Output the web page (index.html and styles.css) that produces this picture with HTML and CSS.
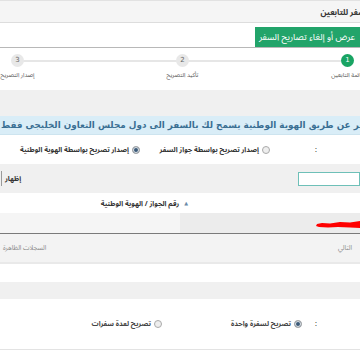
FILE: index.html
```html
<!DOCTYPE html>
<html lang="ar">
<head>
    <meta charset="UTF-8">
    <meta name="viewport" content="width=device-width, initial-scale=1.0">
    <title>تصاريح السفر للتابعين</title>
    <link rel="stylesheet" href="styles.css">
</head>
<body>
    <div class="page">
        <div class="panel-head">
            <h2 class="panel-title">تصاريح السفر للتابعين</h2>
        </div>
        <div class="tabs">
            <a class="tab active">عرض أو إلغاء تصاريح السفر</a>
        </div>
        <div class="steps">
            <div class="step done"><span class="dot">1</span><span class="step-label">قائمة التابعين</span></div>
            <div class="step"><span class="dot">2</span><span class="step-label">تأكيد التصريح</span></div>
            <div class="step last"><span class="dot">3</span><span class="step-label">إصدار التصريح</span></div>
        </div>
        <div class="spacer"></div>
        <div class="alert"><span class="alert-text">إصدار تصريح السفر عن طريق الهوية الوطنية يسمح لك بالسفر الى دول مجلس التعاون الخليجي فقط</span></div>
        <div class="option-row">
            <span class="colon">:</span>
            <label class="radio"><span class="radio-mark"></span>إصدار تصريح بواسطة جواز السفر</label>
            <label class="radio"><span class="radio-mark checked"></span>إصدار تصريح بواسطة الهوية الوطنية</label>
        </div>
        <div class="search-bar">
            <input type="text" class="search-input">
            <span class="show-btn">إظهار</span>
        </div>
        <div class="grid">
            <div class="grid-head">
                <div class="cell cell-main"></div>
                <div class="cell cell-id"><span class="sort">▲</span>رقم الجواز / الهوية الوطنية</div>
            </div>
            <div class="grid-row">
                <div class="cell cell-main">
                    <svg class="redact" width="44" height="9" viewBox="0 0 44 9"><path d="M1 4 L6 3 L14 3.5 L24 2 L34 2.5 L44 1 L44 8 L34 7.5 L22 7 L12 7.5 L3 7 L0 6 Z" fill="#f00"/></svg>
                </div>
                <div class="cell cell-id"></div>
            </div>
            <div class="grid-foot">
                <span class="next">التالي</span>
                <span class="info">السجلات الظاهرة</span>
            </div>
        </div>
        <div class="blank"></div>
        <div class="spacer small"></div>
        <div class="option-row trip">
            <span class="colon">:</span>
            <label class="radio"><span class="radio-mark checked"></span>تصريح لسفرة واحدة</label>
            <label class="radio"><span class="radio-mark"></span>تصريح لعدة سفرات</label>
        </div>
    </div>
</body>
</html>
```

FILE: styles.css
```css
html, body {
    margin: 0;
    padding: 0;
    overflow: hidden;
}
body {
    width: 360px;
    height: 360px;
    background-color: #fff;
    font-family: "Noto Sans Arabic", "DejaVu Sans", sans-serif;
    font-size: 7px;
    color: #333;
}
.page {
    direction: rtl;
}
.panel-head {
    height: 21px;
    background-color: #f5f5f5;
    border-top: 1px solid #e2e2e2;
    border-bottom: 1px solid #ddd;
    overflow: hidden;
}
.panel-title {
    margin: 0 -38px 0 0;
    font-size: 8px;
    font-weight: bold;
    line-height: 23px;
    white-space: nowrap;
    color: #333;
}
.tabs {
    display: flex;
    padding-top: 4px;
    border-bottom: 1px solid #b8b8b8;
    box-shadow: 0 1px 0 #e4e4e4;
}
.tab {
    display: block;
    height: 20px;
    line-height: 21px;
    padding: 0 5px 0 4px;
    font-size: 9px;
    color: #fff;
    white-space: nowrap;
}
.tab.active {
    background-color: #22a46a;
}
.steps {
    display: flex;
    margin: 0 -70px 0 -65px;
    height: 42px;
    background-color: #fff;
}
.step {
    position: relative;
    width: 165px;
    display: flex;
    flex-direction: column;
    align-items: center;
}
.step::after {
    content: "";
    position: absolute;
    top: 12px;
    right: 50%;
    width: 100%;
    height: 2px;
    background-color: #e6e6e6;
    z-index: 0;
}
.step.last::after {
    display: none;
}
.dot {
    position: relative;
    z-index: 1;
    width: 13px;
    height: 13px;
    margin-top: 6px;
    border-radius: 50%;
    background-color: #e8e8e8;
    color: #666;
    font-family: "DejaVu Sans", sans-serif;
    font-size: 7px;
    line-height: 13px;
    text-align: center;
}
.step.done .dot {
    background-color: #19a463;
    color: #fff;
}
.step-label {
    margin-top: 3px;
    font-size: 6px;
    line-height: 10px;
    color: #555;
    white-space: nowrap;
}
.spacer {
    height: 26px;
    background-color: #f0f0f0;
}
.spacer.small {
    height: 17px;
}
.alert {
    display: flex;
    direction: ltr;
    height: 18px;
    background-color: #d9edf7;
    border-bottom: 1px solid #cde4ef;
    overflow: hidden;
}
.alert-text {
    flex: none;
    direction: rtl;
    padding-left: 1px;
    white-space: nowrap;
    font-family: "DejaVu Sans", sans-serif;
    font-size: 8.8px;
    font-weight: bold;
    line-height: 18px;
    color: #3a6f93;
}
.option-row {
    display: flex;
    align-items: center;
    height: 29px;
    background-color: #fff;
    font-weight: bold;
    line-height: 12px;
    color: #333;
}
.colon {
    width: 90px;
    padding-right: 43px;
    box-sizing: border-box;
    font-weight: normal;
}
.radio {
    display: flex;
    align-items: center;
    gap: 3px;
    white-space: nowrap;
}
.option-row .radio:nth-of-type(1) {
    width: 130px;
}
.radio-mark {
    width: 6px;
    height: 6px;
    border: 1px solid #aaa;
    border-radius: 50%;
    background-color: #eee;
}
.radio-mark.checked {
    background-color: #3b5a78;
    box-shadow: inset 0 0 0 1px #e0e6ec;
}
.search-bar {
    display: flex;
    justify-content: space-between;
    align-items: center;
    height: 29px;
    background-color: #f0f0f0;
}
.search-input {
    width: 60px;
    height: 12px;
    margin: 0 0 0 -8px;
    padding: 0;
    border: 1px solid #6ec0b8;
    background-color: #fff;
}
.show-btn {
    margin-left: 1px;
    padding-left: 3px;
    border-left: 1px solid #9a9a9a;
    line-height: 15px;
    font-weight: bold;
    color: #333;
}
.grid-head, .grid-row {
    display: flex;
    height: 20px;
}
.grid-head {
    background-color: #fff;
    font-size: 7px;
    font-weight: bold;
}
.cell {
    display: flex;
    align-items: center;
}
.cell-main {
    width: 180px;
}
.cell-id {
    width: 180px;
}
.grid-head .cell-main {
    width: 172px;
}
.grid-head .cell-id {
    width: 188px;
}
.sort {
    font-family: "DejaVu Sans", sans-serif;
    font-size: 5px;
    color: #6b8aa8;
    margin-left: 5px;
}
.grid-row {
    border-bottom: 1px solid #7a7a7a;
}
.grid-row .cell-main {
    background-color: #ececec;
    align-items: flex-end;
    padding-bottom: 4px;
    box-sizing: border-box;
}
.grid-row .cell-id {
    background-color: #f5f5f5;
}
.grid-foot {
    display: flex;
    justify-content: space-between;
    align-items: center;
    height: 28px;
    padding: 0 8px 0 3px;
    background-color: #f3f3f3;
    border-bottom: 2px solid #e9e9e9;
    font-size: 6.5px;
    color: #888;
}
.blank {
    height: 18px;
    background-color: #fff;
}
.trip {
    height: 50px;
    border-bottom: 1px solid #e3e3e3;
}
.trip .colon {
    width: 58px;
}
.trip .radio {
    color: #444;
}
.trip .radio:nth-of-type(1) {
    width: 140px;
}
```
